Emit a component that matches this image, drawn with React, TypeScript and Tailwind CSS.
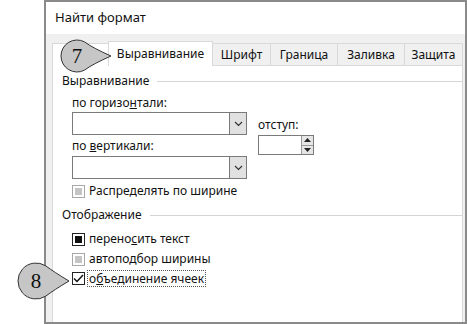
import React from 'react';

const font = { fontFamily: '"Noto Sans", "Open Sans", sans-serif' };

const Chevron: React.FC = () => (
    <svg width="9" height="6" viewBox="0 0 9 6" className="text-[#333]">
        <path d="M1 1 L4.5 4.5 L8 1" fill="none" stroke="currentColor" strokeWidth="1.2" />
    </svg>
);

const Select: React.FC = () => (
    <div className="flex h-[23px] w-[175px] border border-[#7a7a7a] bg-white">
        <div className="flex-1" />
        <div className="flex w-[17px] items-center justify-center border-l border-[#7a7a7a] bg-[#e1e1e1]">
            <Chevron />
        </div>
    </div>
);

const SpinBox: React.FC = () => (
    <div className="flex h-[20px] w-[56px] border border-[#7a7a7a] bg-white">
        <div className="flex-1" />
        <div className="flex w-[12px] flex-col border-l border-[#9a9a9a] bg-[#e6e6e6]">
            <div className="flex flex-1 items-center justify-center border-b border-[#9a9a9a]">
                <svg width="7" height="4" viewBox="0 0 7 4"><path d="M0 4 L3.5 0 L7 4 Z" fill="#222" /></svg>
            </div>
            <div className="flex flex-1 items-center justify-center">
                <svg width="7" height="4" viewBox="0 0 7 4"><path d="M0 0 L3.5 4 L7 0 Z" fill="#222" /></svg>
            </div>
        </div>
    </div>
);

type BoxKind = 'disabled' | 'indeterminate' | 'checked';

const CheckBox: React.FC<{ kind: BoxKind }> = ({ kind }) => {
    if (kind === 'disabled') {
        return (
            <div className="flex h-[13px] w-[13px] items-center justify-center border border-[#a8a8a8] bg-white">
                <div className="h-[7px] w-[7px] bg-[#c4c4c4]" />
            </div>
        );
    }
    if (kind === 'indeterminate') {
        return (
            <div className="flex h-[13px] w-[13px] items-center justify-center border border-[#222] bg-white">
                <div className="h-[7px] w-[7px] bg-[#111]" />
            </div>
        );
    }
    return (
        <div className="flex h-[13px] w-[13px] items-center justify-center border border-[#222] bg-white">
            <svg width="11" height="9" viewBox="0 0 11 9">
                <path d="M1 4.5 L4 7.5 L10 1" fill="none" stroke="#111" strokeWidth="1.5" />
            </svg>
        </div>
    );
};

const GroupLabel: React.FC<{ text: string }> = ({ text }) => (
    <div className="flex h-[16px] items-center">
        <span className="pr-[8px] leading-[16px]">{text}</span>
        <div className="h-px flex-1 bg-[#d5d5d5]" />
    </div>
);

const Callout: React.FC<{ n: string; cx: number; cy: number; r: number; tip: number; className: string }> = ({ n, cx, cy, r, tip, className }) => {
    const d = tip - cx;
    const a = Math.acos(r / d);
    const tx = cx + r * Math.cos(a);
    const ty = r * Math.sin(a);
    const w = tip + 2;
    const h = cy + r + 2;
    return (
        <svg width={w} height={h} className={className}>
            <path
                d={`M ${tip} ${cy} Q ${tx + 8} ${cy - ty + 6} ${tx} ${cy - ty} A ${r} ${r} 0 1 0 ${tx} ${cy + ty} Q ${tx + 8} ${cy + ty - 6} ${tip} ${cy} Z`}
                fill="#c6c6c6"
                stroke="#333"
                strokeWidth="1"
            />
            <text x={cx} y={cy + 7} textAnchor="middle" fontSize="21" fill="#111" style={{ fontFamily: '"Liberation Serif", serif' }}>
                {n}
            </text>
        </svg>
    );
};

const tabs = [
    { label: 'Шрифт', w: 'w-[58px]' },
    { label: 'Граница', w: 'w-[67px]' },
    { label: 'Заливка', w: 'w-[67px]' },
    { label: 'Защита', w: 'w-[58px]' },
];

const App: React.FC = () => {
    return (
        <div className="relative h-[324px] w-[467px] overflow-hidden bg-white text-[12px] text-[#111]" style={font}>
            <div className="ml-[44px] flex h-[324px] w-[423px] flex-col border-2 border-[#8a8a8a]">
                <div className="flex h-[32px] items-center bg-white pl-[9px] text-[13px]">Найти формат</div>
                <div className="flex flex-1 flex-col bg-[#f0f0f0] pl-[6px] pr-[2px] pt-[7px]">
                    <div className="flex h-[25px] items-end">
                        <div className="h-[23px] w-[56px] border-l border-t border-[#d9d9d9] bg-white" />
                        <div className="flex h-[25px] w-[105px] items-center justify-center border-l border-r border-t border-[#d9d9d9] bg-white pb-[1px]">
                            Выравнивание
                        </div>
                        {tabs.map(t => (
                            <div key={t.label} className={`flex h-[23px] ${t.w} items-center justify-center border-b border-r border-t border-[#d9d9d9] bg-[#f0f0f0]`}>
                                {t.label}
                            </div>
                        ))}
                    </div>
                    <div className="flex-1 border-l border-r border-[#d9d9d9] bg-white pl-[9px] pt-[7px]">
                        <GroupLabel text="Выравнивание" />
                        <div className="flex pl-[10px] pt-[6px]">
                            <div className="flex flex-col">
                                <div className="h-[16px] leading-[16px]">по горизо<u>н</u>тали:</div>
                                <div className="mt-[1px]"><Select /></div>
                                <div className="mt-[3px] h-[16px] leading-[16px]">по <u>в</u>ертикали:</div>
                                <div className="mt-[2px]"><Select /></div>
                            </div>
                            <div className="ml-[11px] flex flex-col pt-[22px]">
                                <div className="h-[16px] leading-[16px]">отступ:</div>
                                <div className="mt-[2px]"><SpinBox /></div>
                            </div>
                        </div>
                        <div className="mt-[4px] flex items-center gap-[4px] pl-[10px]">
                            <CheckBox kind="disabled" />
                            <span className="leading-[16px]">Распределять по ширине</span>
                        </div>
                        <div className="mt-[8px]"><GroupLabel text="Отображение" /></div>
                        <div className="mt-[8px] flex items-center gap-[4px] pl-[10px]">
                            <CheckBox kind="indeterminate" />
                            <span className="leading-[16px]">перено<u>с</u>ить текст</span>
                        </div>
                        <div className="mt-[4px] flex items-center gap-[4px] pl-[10px]">
                            <CheckBox kind="disabled" />
                            <span className="leading-[16px]">автоподбор ширины</span>
                        </div>
                        <div className="mt-[3px] flex items-center gap-[2px] pl-[10px]">
                            <CheckBox kind="checked" />
                            <span className="border border-dotted border-[#555] px-[1px] leading-[15px]">о<u>б</u>ъединение ячеек</span>
                        </div>
                    </div>
                </div>
            </div>
            <Callout n="7" cx={77} cy={56} r={16} tip={111} className="absolute left-0 top-0" />
            <Callout n="8" cx={36} cy={281} r={18} tip={69} className="absolute left-0 top-0" />
        </div>
    );
};

export default App;
